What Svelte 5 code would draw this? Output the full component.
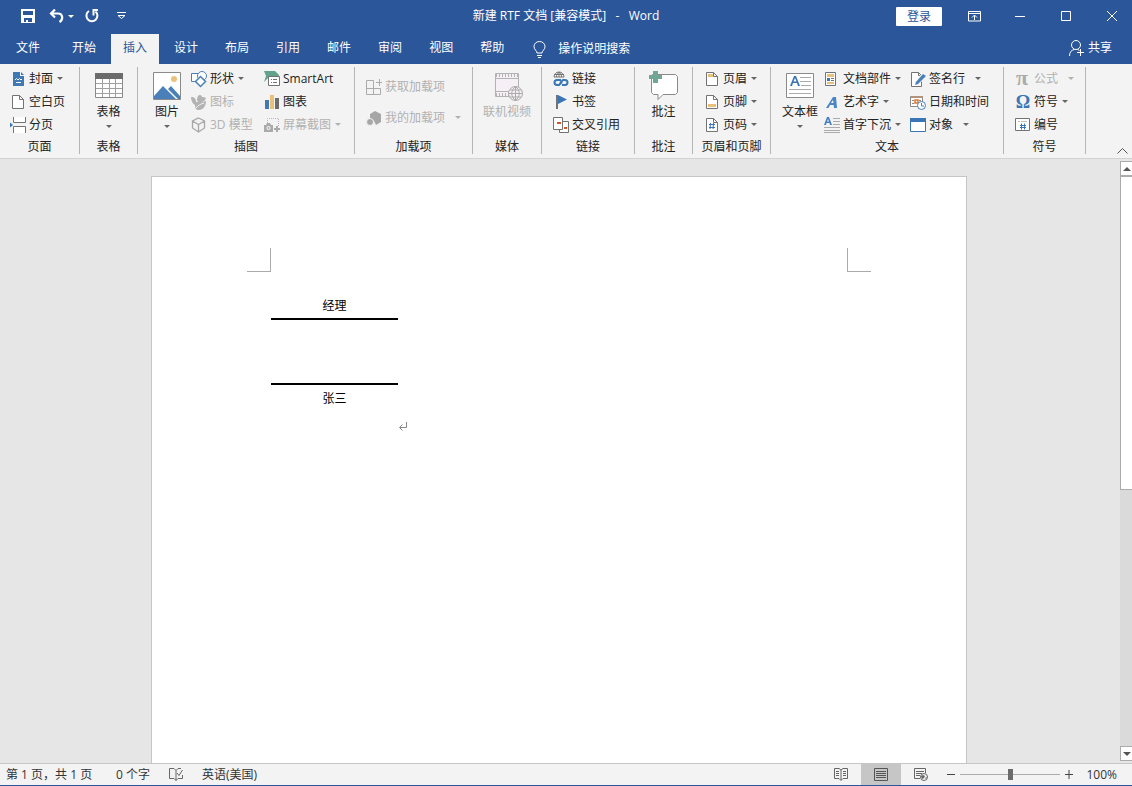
<script lang="ts">
	type Tool = { label: string; icon: string; caret?: 'near' | 'far'; disabled?: boolean };

	const tabs = ['开始', '插入', '设计', '布局', '引用', '邮件', '审阅', '视图', '帮助'];
	let activeTab = $state('插入');
	let view = $state('print');
	let zoom = $state(100);
	let query = $state('');

	const pages: Tool[] = [
		{ label: '封面', icon: 'cover', caret: 'near' },
		{ label: '空白页', icon: 'blank' },
		{ label: '分页', icon: 'break' }
	];
	const shapes: Tool[] = [
		{ label: '形状', icon: 'shapes', caret: 'near' },
		{ label: '图标', icon: 'leaf', disabled: true },
		{ label: '3D 模型', icon: 'cube', disabled: true }
	];
	const charts: Tool[] = [
		{ label: 'SmartArt', icon: 'smartart' },
		{ label: '图表', icon: 'chart' },
		{ label: '屏幕截图', icon: 'screenshot', caret: 'near', disabled: true }
	];
	const addins: Tool[] = [
		{ label: '获取加载项', icon: 'store', disabled: true },
		{ label: '我的加载项', icon: 'addin', caret: 'far', disabled: true }
	];
	const links: Tool[] = [
		{ label: '链接', icon: 'link' },
		{ label: '书签', icon: 'flag' },
		{ label: '交叉引用', icon: 'crossref' }
	];
	const headers: Tool[] = [
		{ label: '页眉', icon: 'header', caret: 'near' },
		{ label: '页脚', icon: 'footer', caret: 'near' },
		{ label: '页码', icon: 'pagenum', caret: 'near' }
	];
	const texts: Tool[] = [
		{ label: '文档部件', icon: 'parts', caret: 'near' },
		{ label: '艺术字', icon: 'wordart', caret: 'near' },
		{ label: '首字下沉', icon: 'dropcap', caret: 'near' }
	];
	const inserts: Tool[] = [
		{ label: '签名行', icon: 'sign', caret: 'far' },
		{ label: '日期和时间', icon: 'date' },
		{ label: '对象', icon: 'object', caret: 'far' }
	];
	const symbols: Tool[] = [
		{ label: '公式', icon: 'pi', caret: 'far', disabled: true },
		{ label: '符号', icon: 'omega', caret: 'near' },
		{ label: '编号', icon: 'number' }
	];
</script>

{#snippet sheet()}
	<path d="M2.5 1.5h7l4 4v9h-11z" fill="#fff" stroke="#737373" />
	<path d="M9.5 1.5v4h4" fill="none" stroke="#737373" />
{/snippet}

{#snippet icon(name: string)}
	<svg class="icon" viewBox="0 0 16 16" aria-hidden="true">
		{#if name === 'cover'}
			<path d="M3 1h7v4h4v10H3z" fill="#4179b5" />
			<path d="M11 1l3 3h-3z" fill="#4179b5" />
			<path d="M5 9l1.500-1.500L8 9l1.500-1.500L11 9l1-1M6 11.500h5" fill="none" stroke="#fff" />
		{:else if name === 'blank'}
			{@render sheet()}
		{:else if name === 'break'}
			<path d="M0 5.500v5l3-2.500z" fill="#3a76b5" />
			<path d="M3.500 0v5.500h12V0M3.500 16V9.500h12V16" fill="#fff" stroke="#737373" />
		{:else if name === 'shapes'}
			<path d="M.5 2.500h8v8h-8z" fill="#fff" stroke="#4a80ba" />
			<circle cx="11" cy="5" r="4.500" fill="#fff" stroke="#4a80ba" />
			<path d="M9.500 5.500l5 5-5 5-5-5z" fill="#fff" stroke="#4a80ba" stroke-width="1.500" />
		{:else if name === 'leaf'}
			<path d="M6 6C6 3 7 1 9 1c1 0 2 1 2 2 1 0 3 0 4 1-1 3-3 4-5 4H8C7 8 6 7 6 6z" fill="#b3b3b3" />
			<path d="M0 3c3 0 5 1 5 5h2c3 0 6 0 8-1 0 5-3 9-7 9-3 0-4-2-4-5C2 10 0 7 0 3z" fill="#b3b3b3" />
			<path d="M5 14c2-3 5-4 8-5" fill="none" stroke="#f3f3f3" />
		{:else if name === 'cube'}
			<path d="M7.500 1l6 3v7l-6 4-6-4V4zM1.500 4l6 3.500 6-3.500M7.500 7.500V15" fill="none" stroke="#a8a8a8" stroke-width="1.300" />
		{:else if name === 'smartart'}
			<path d="M0 0h11l4 4v2H5L0 11l2-6z" fill="#62a38c" />
			<path d="M4.500 5.500h11v9h-11z" fill="#fff" stroke="#737373" />
			<path d="M7 8.500h1m1 0h4M7 11.500h1m1 0h4" stroke="#737373" />
		{:else if name === 'chart'}
			<path d="M1 6h4v9H1z" fill="#4179b5" />
			<path d="M6 1h4v14H6z" fill="#e8c07a" />
			<path d="M11 4h4v11h-4z" fill="#6b6b6b" />
		{:else if name === 'screenshot'}
			<path d="M3.500 8V1.500h11V10" fill="none" stroke="#c0b0c8" stroke-dasharray="1 1" />
			<path d="M0 8h2l1-2h3l1 2h2v7H0z" fill="#aaa" />
			<circle cx="4.500" cy="11" r="2" fill="#f3f3f3" />
			<circle cx="4.500" cy="11" r="1" fill="#aaa" />
			<path d="M10 12h6M13 9v6" stroke="#aaa" stroke-width="2" />
		{:else if name === 'store'}
			<path d="M7.500 1.500h-7v14h14v-6H.500M7.500 1.500v14M10 3.500h6M13.500 0v7" fill="none" stroke="#ababab" />
		{:else if name === 'addin'}
			<path d="M4 4l5-3 6 3v8l-5 3-2-4-4-2z" fill="#a6a6a6" />
			<circle cx="4" cy="12" r="3.500" fill="#a6a6a6" stroke="#f3f3f3" />
		{:else if name === 'link'}
			<path d="M1 6a5 5 0 0 1 10 0zM1 3.500h10M6 1v5M3.500 6c0-6 5-6 5 0" fill="#fff" stroke="#737373" />
			<path d="M8 9H4a2.500 2.500 0 0 0 0 5h2l3-3M9 14h3a2.500 2.500 0 0 0 0-5h-2l-3 3" fill="none" stroke="#3a76b5" stroke-width="2" />
		{:else if name === 'flag'}
			<path d="M4 1v14" stroke="#737373" stroke-width="2" />
			<path d="M5 1l9 4.500L5 10z" fill="#3a76b5" />
		{:else if name === 'crossref'}
			<path d="M6.500 4.500h9v11h-9z" fill="#fff" stroke="#737373" />
			<path d="M.5.500h9v12h-9z" fill="#fff" stroke="#737373" />
			<path d="M4 5h4v2H4zM11 10h3v2h-3z" fill="#d3532f" />
		{:else if name === 'header'}
			{@render sheet()}
			<path d="M4 3h5v3H4z" fill="#e8c07a" />
		{:else if name === 'footer'}
			{@render sheet()}
			<path d="M4 10h8v3H4z" fill="#e8c07a" />
		{:else if name === 'pagenum'}
			{@render sheet()}
			<path d="M5 7.500h6M5 10.500h6M6.500 6l-.500 6M9.500 6L9 12" stroke="#3a76b5" />
		{:else if name === 'parts'}
			<path d="M1.500 1.500h10v13h-10z" fill="#fff" stroke="#737373" />
			<path d="M3 3h7v3H3zM3 11h7v2H3z" fill="#e8c07a" />
			<path d="M3 7h3v3H3z" fill="#3a76b5" />
			<path d="M7 7.500h3M7 9.500h3" stroke="#737373" />
		{:else if name === 'wordart'}
			<path d="M2 14L9 3h3l1 11h-3l-.300-3H6l-1.500 3zM7 9h2.500L9 6z" fill="#4a86c4" fill-rule="evenodd" />
		{:else if name === 'dropcap'}
			<path d="M0 8l3-8h2l3 8H6L5.500 6h-3L2 8zM3 4.500h2L4 2z" fill="#4a80ba" fill-rule="evenodd" />
			<path d="M9 1.500h7M9 4.500h7M9 7.500h7M0 10.500h16M0 13.500h16M0 15.500h16" stroke="#ababab" />
		{:else if name === 'sign'}
			<path d="M1.500 1.500h7l3 3v11h-10z" fill="#fff" stroke="#737373" />
			<path d="M8.500 1.500v3h3" fill="none" stroke="#737373" />
			<path d="M6 13l8-9" stroke="#f3f3f3" stroke-width="5" />
			<path d="M5 14l1-3 7-8 3 2-8 8z" fill="#4a80ba" />
		{:else if name === 'date'}
			<path d="M.5 2.500h12v10H.500z" fill="#fff" stroke="#8a8a8a" />
			<path d="M1 2h12v2H1z" fill="#b5937a" />
			<path d="M2 6.500h2M2 9.500h2M9 6.500h2" stroke="#8a8a8a" />
			<path d="M5 6h3v3H5z" fill="#fff" stroke="#e0752f" stroke-width="1.500" />
			<circle cx="11.500" cy="11.500" r="4" fill="#fff" stroke="#4a80ba" />
			<path d="M11.500 9v3H14" fill="none" stroke="#4a80ba" />
		{:else if name === 'object'}
			<path d="M.5 1.500h15v13H.500z" fill="#fff" stroke="#3a76b5" />
			<path d="M0 1h16v4H0z" fill="#3a76b5" />
		{:else if name === 'pi'}
			<text x="7" y="14" text-anchor="middle" font-size="22" fill="#ababab">π</text>
		{:else if name === 'omega'}
			<text x="8" y="14" text-anchor="middle" font-size="18" fill="#3a76b5">Ω</text>
		{:else if name === 'number'}
			<path d="M.5 1.500h14v12H.500z" fill="#fff" stroke="#737373" />
			<path d="M3 4.500h2M6 4.500h6" stroke="#c0c0c0" />
			<path d="M5 8.500h6M5 10.500h6M6.500 6.500v6M9.500 6.500v6" stroke="#3a76b5" />
		{/if}
	</svg>
{/snippet}

{#snippet tool(t: Tool)}
	<button class="tool" disabled={t.disabled}>
		{@render icon(t.icon)}
		<span>{t.label}</span>
		{#if t.caret}<i class="caret {t.caret}"></i>{/if}
	</button>
{/snippet}

{#snippet column(list: Tool[])}
	<div class="column">
		{#each list as t}
			{@render tool(t)}
		{/each}
	</div>
{/snippet}

<div class="window">
	<header class="titlebar">
		<div class="quick">
			<button aria-label="保存">
				<svg width="14" height="14" viewBox="0 0 14 14"><path d="M0 0h14v14H0zM2 2v4h10V2zM3 9v4h2v-2h2v2h4V9z" fill="#fff" fill-rule="evenodd" /></svg>
			</button>
			<button class="undo" aria-label="撤消">
				<svg width="15" height="14" viewBox="0 0 15 14"><path d="M6 .500L2 4.500l4 4M2 4.500h7c5 0 5.500 6 1.500 8.500" fill="none" stroke="#fff" stroke-width="2.200" /></svg>
				<i class="caret"></i>
			</button>
			<button aria-label="重复">
				<svg width="14" height="14" viewBox="0 0 14 14"><path d="M4 2a5.500 5.500 0 1 0 6.500.500" fill="none" stroke="#fff" stroke-width="2" /><path d="M7.500 1H13M8.500 1v5.500" fill="none" stroke="#fff" stroke-width="2" /></svg>
			</button>
			<button class="customize" aria-label="自定义快速访问工具栏">
				<svg width="9" height="8" viewBox="0 0 9 8"><path d="M0 .500h9M1 3.500l3.500 3L8 3.500z" fill="none" stroke="#fff" /></svg>
			</button>
		</div>
		<h1>新建 RTF 文档 [兼容模式]&nbsp;&nbsp; -&nbsp;&nbsp; Word</h1>
		<div class="controls">
			<button class="login">登录</button>
			<button class="control" aria-label="功能区显示选项">
				<svg width="13" height="11" viewBox="0 0 13 11"><path d="M.5.500h12v9.500H.500zM0 2.500h13M6.500 9V4.500M4 6.500L6.500 4 9 6.500" fill="none" stroke="#fff" /></svg>
			</button>
			<button class="control" aria-label="最小化">
				<svg width="10" height="11" viewBox="0 0 10 11"><path d="M0 5.500h10" stroke="#fff" /></svg>
			</button>
			<button class="control" aria-label="最大化">
				<svg width="10" height="10" viewBox="0 0 10 10"><path d="M.5.500h9v9h-9z" fill="none" stroke="#fff" /></svg>
			</button>
			<button class="control" aria-label="关闭">
				<svg width="10" height="10" viewBox="0 0 10 10"><path d="M0 0l10 10M10 0L0 10" stroke="#fff" /></svg>
			</button>
		</div>
	</header>

	<nav class="tabs">
		<button class="tab file">文件</button>
		{#each tabs as tab}
			<button class="tab" class:active={tab === activeTab} onclick={() => (activeTab = tab)}>{tab}</button>
		{/each}
		<label class="tell">
			<svg width="13" height="17" viewBox="0 0 13 17" aria-hidden="true">
				<path d="M4 12C4 9.500 1 9 1 5.500a5.500 5 0 0 1 11 0C12 9 9 9.500 9 12zM4 14.500h5M5 16.500h3" fill="none" stroke="#fff" />
			</svg>
			<input type="text" placeholder="操作说明搜索" aria-label="操作说明搜索" bind:value={query} />
		</label>
		<button class="share">
			<svg width="16" height="17" viewBox="0 0 16 17" aria-hidden="true">
				<circle cx="7" cy="5" r="4.500" fill="none" stroke="#fff" />
				<path d="M.5 16c0-4 2-6 5-6.500M8.500 9.500l2 1M8 12.500h7M11.500 9v7" fill="none" stroke="#fff" />
			</svg>
			共享
		</button>
	</nav>

	<div class="ribbon">
		<section class="group" aria-label="页面">
			<div class="tools first">{@render column(pages)}</div>
			<h2>页面</h2>
		</section>

		<section class="group" aria-label="表格">
			<div class="tools center">
				<button class="big">
					<svg viewBox="0 0 30 30" aria-hidden="true">
						<path d="M1.500 2.500h27v24h-27z" fill="#fff" stroke="#8a8a8a" />
						<path d="M1 2h28v6H1z" fill="#6b6b6b" />
						<path d="M2 12.500h26M2 17.500h26M2 22.500h26M8.500 8v18M15.500 8v18M21.500 8v18" stroke="#a0a0a0" />
					</svg>
					表格
					<i class="caret"></i>
				</button>
			</div>
			<h2>表格</h2>
		</section>

		<section class="group" aria-label="插图">
			<div class="tools">
				<button class="big">
					<svg viewBox="0 0 30 30" aria-hidden="true">
						<path d="M1.500 1.500h27v27h-27z" fill="#fff" stroke="#8a8a8a" />
						<circle cx="22" cy="8" r="3" fill="#ebc27c" />
						<path d="M2 28v-3l9-10 13 13zM16 18l3-3 9 10v3h-2z" fill="#4a80ba" />
					</svg>
					图片
					<i class="caret"></i>
				</button>
				<div class="shapes">{@render column(shapes)}</div>
				{@render column(charts)}
			</div>
			<h2>插图</h2>
		</section>

		<section class="group" aria-label="加载项">
			<div class="tools inset loose">{@render column(addins)}</div>
			<h2>加载项</h2>
		</section>

		<section class="group" aria-label="媒体">
			<div class="tools center">
				<button class="big" disabled>
					<svg viewBox="-2 0 30 30" aria-hidden="true">
						<path d="M1.500 2.500h23v23h-23z" fill="#f6f0f6" stroke="#b3b3b3" />
						<path d="M2 4.500h22M2 23.500h22" stroke="#b3b3b3" stroke-width="3" stroke-dasharray="1 2" />
						<path d="M2 7.500h22M2 20.500h22" stroke="#b3b3b3" />
						<circle cx="21.500" cy="22.500" r="7" fill="#f6f0f6" stroke="#ababab" />
						<path d="M14.500 22.500h14M21.500 15.500v14M16 19h11M16 26h11M21.500 15.500c-5 4-5 10 0 14 5-4 5-10 0-14" fill="none" stroke="#ababab" />
					</svg>
					联机视频
				</button>
			</div>
			<h2>媒体</h2>
		</section>

		<section class="group" aria-label="链接">
			<div class="tools inset">{@render column(links)}</div>
			<h2>链接</h2>
		</section>

		<section class="group" aria-label="批注">
			<div class="tools center">
				<button class="big">
					<svg viewBox="0 0 30 30" aria-hidden="true">
						<path d="M3.500 3.500h23l2 2v16l-2 2H14l-5 5v-5H4.500l-2-2v-17z" fill="#fff" stroke="#8a8a8a" />
						<path d="M0 4h4V0h5v4h4v4H9v4H4V8H0z" fill="#6fa792" />
					</svg>
					批注
				</button>
			</div>
			<h2>批注</h2>
		</section>

		<section class="group" aria-label="页眉和页脚">
			<div class="tools inset">{@render column(headers)}</div>
			<h2>页眉和页脚</h2>
		</section>

		<section class="group" aria-label="文本">
			<div class="tools">
				<button class="big">
					<svg viewBox="0 0 30 30" aria-hidden="true">
						<path d="M1.500 2.500h27v24h-27z" fill="#fff" stroke="#8a8a8a" />
						<path d="M5 15l4-10h2l4 10h-2l-1-3H8l-1 3zM8.500 10.500h3L10 7z" fill="#3a76b5" fill-rule="evenodd" />
						<path d="M15 6.500h11M15 10.500h11M16 14.500h10M4 18.500h22M4 22.500h22" stroke="#ababab" />
					</svg>
					文本框
					<i class="caret"></i>
				</button>
				<div class="parts">{@render column(texts)}</div>
				{@render column(inserts)}
			</div>
			<h2>文本</h2>
		</section>

		<section class="group" aria-label="符号">
			<div class="tools inset">{@render column(symbols)}</div>
			<h2>符号</h2>
		</section>

		<button class="collapse" aria-label="折叠功能区">
			<svg width="11" height="6" viewBox="0 0 11 6"><path d="M.5 5.500l5-5 5 5" fill="none" stroke="#555" /></svg>
		</button>
	</div>

	<main class="workspace">
		<div class="canvas">
			<article class="page">
				<div class="corners">
					<span class="corner left"></span>
					<span class="corner right"></span>
				</div>
				<div class="content">
					<table>
						<tbody>
							<tr><td class="title">经理</td></tr>
							<tr><td class="blank"></td></tr>
							<tr><td class="name">张三</td></tr>
						</tbody>
					</table>
					<svg class="mark" width="10" height="10" viewBox="0 0 10 10" aria-hidden="true">
						<path d="M8.500 1v5.500H2M4.500 3.500l-3 3 3 3" fill="none" stroke="#8a8a8a" />
					</svg>
				</div>
			</article>
		</div>
		<div class="scrollbar">
			<button class="arrow" aria-label="向上滚动"><i class="caret up"></i></button>
			<div class="track"><div class="thumb"></div></div>
			<button class="arrow" aria-label="向下滚动"><i class="caret"></i></button>
		</div>
	</main>

	<footer class="status">
		<span class="pages">第 1 页，共 1 页</span>
		<span>0 个字</span>
		<svg width="14" height="13" viewBox="0 0 14 13" aria-hidden="true">
			<path d="M7 2.500L5 .500H.500v10H5l2 2 2-2h4.500V7M7 2.500v10M7 2.500l2-2h3M8 5l2 2.500L13.500 2" fill="none" stroke="#666" />
		</svg>
		<span>英语(美国)</span>
		<div class="views">
			<button class:on={view === 'read'} aria-label="阅读视图" onclick={() => (view = 'read')}>
				<svg width="14" height="13" viewBox="0 0 14 13">
					<path d="M7 2L5 .500H.500v10H5l2 2 2-2h4.500V.500H9zM7 2v10M2 3.500h3M2 5.500h3M2 7.500h3M9 3.500h3M9 5.500h3M9 7.500h3" fill="none" stroke="#666" />
				</svg>
			</button>
			<button class:on={view === 'print'} aria-label="页面视图" onclick={() => (view = 'print')}>
				<svg width="14" height="13" viewBox="0 0 14 13">
					<path d="M.5.500h13v12H.500zM2 3.500h10M2 5.500h10M2 7.500h10M2 9.500h10" fill="none" stroke="#555" />
				</svg>
			</button>
			<button class:on={view === 'web'} aria-label="Web 版式视图" onclick={() => (view = 'web')}>
				<svg width="14" height="13" viewBox="0 0 14 13">
					<path d="M6 10.500H.500V.500h11V5M2 3.500h8M2 5.500h6M2 7.500h4" fill="none" stroke="#666" />
					<circle cx="10" cy="9" r="3.500" fill="#f3f3f3" stroke="#666" />
					<path d="M7 8l2-1 2 1-1 2-2 1zM11 10l2-1-1 2z" fill="#666" />
				</svg>
			</button>
		</div>
		<div class="zoom">
			<button aria-label="缩小" onclick={() => (zoom = Math.max(10, zoom - 10))}>
				<svg width="8" height="9" viewBox="0 0 8 9"><path d="M0 4.500h8" stroke="#444" /></svg>
			</button>
			<input type="range" min="0" max="200" bind:value={zoom} aria-label="缩放" />
			<button aria-label="放大" onclick={() => (zoom = Math.min(200, zoom + 10))}>
				<svg width="8" height="9" viewBox="0 0 8 9"><path d="M0 4.500h8M4 0v9" stroke="#444" /></svg>
			</button>
			<span class="percent">{zoom}%</span>
		</div>
	</footer>
</div>

<style>
	:global(body) {
		margin: 0;
		overflow: hidden;
	}

	.window {
		display: flex;
		flex-direction: column;
		box-sizing: border-box;
		border-bottom: 1px solid #2b579a;
		height: 100vh;
		color: #222;
		font-size: 12px;
		line-height: 20px;
		font-family: 'Open Sans', 'Noto Sans CJK SC', sans-serif;
	}

	button,
	input {
		margin: 0;
		border: 0;
		background: none;
		padding: 0;
		color: inherit;
		font: inherit;
	}

	button {
		white-space: nowrap;
	}

	svg {
		display: block;
		flex: none;
	}

	h1,
	h2 {
		margin: 0;
		font-weight: 400;
		font-size: 12px;
	}

	.caret {
		flex: none;
		border-top: 3px solid currentColor;
		border-right: 3px solid transparent;
		border-left: 3px solid transparent;
		width: 0;
		height: 0;
	}

	/* title bar */

	.titlebar {
		display: grid;
		grid-template-columns: 1fr auto 1fr;
		flex: none;
		align-items: center;
		background: #2b579a;
		height: 32px;
		color: #fff;
	}

	.quick {
		display: flex;
		align-items: center;
		gap: 11px;
		padding-left: 21px;
	}

	.quick button {
		display: flex;
		align-items: center;
		gap: 4px;
	}

	.quick .undo {
		padding-left: 3px;
	}

	.quick .customize {
		padding-left: 7px;
	}

	.controls {
		display: flex;
		justify-content: flex-end;
		align-items: center;
		gap: 6px;
	}

	.control {
		display: flex;
		justify-content: center;
		align-items: center;
		width: 40px;
		height: 32px;
	}

	.login {
		margin-right: 6px;
		border-radius: 1px;
		background: #fff;
		width: 46px;
		height: 19px;
		color: #2b579a;
		line-height: 19px;
	}

	/* tabs */

	.tabs {
		display: flex;
		flex: none;
		align-items: flex-end;
		gap: 3px;
		background: #2b579a;
		padding: 0 20px 0 4px;
		height: 32px;
		color: #fff;
	}

	.tab {
		padding: 0 12px 2px;
		height: 30px;
	}

	.file {
		margin-right: 5px;
	}

	.tab.active {
		background: #f3f3f3;
		color: #2b579a;
	}

	.tell {
		display: flex;
		flex: 1;
		align-items: center;
		gap: 12px;
		padding-left: 14px;
		height: 30px;
	}

	.tell input {
		flex: 1;
		outline: none;
		padding-bottom: 2px;
		min-width: 0;
		height: 28px;
	}

	.tell input::placeholder {
		opacity: 1;
		color: #fff;
	}

	.share {
		display: flex;
		align-items: center;
		gap: 3px;
		padding-bottom: 2px;
		height: 30px;
	}

	/* ribbon */

	.ribbon {
		display: grid;
		grid-template-rows: 94px;
		grid-template-columns: 80px 58px 217px 118px 69px 93px 58px 78px 233px 82px 1fr;
		flex: none;
		border-bottom: 1px solid #d2d2d2;
		background: #f3f3f3;
	}

	.group {
		margin: 3px 0 4px;
		border-right: 1px solid #b5b5b5;
		min-width: 0;
	}

	.group h2 {
		line-height: 16px;
		text-align: center;
	}

	.tools {
		display: flex;
		gap: 2px;
		padding-left: 7px;
		height: 72px;
	}

	.first {
		padding-left: 10px;
	}

	.inset {
		padding-left: 11px;
	}

	.center {
		justify-content: center;
		padding-left: 0;
	}

	.column {
		display: flex;
		flex-direction: column;
		align-items: flex-start;
	}

	.tool {
		display: flex;
		align-items: center;
		gap: 3px;
		height: 23px;
		line-height: 23px;
	}

	.loose .tool {
		height: 31px;
	}

	.loose .column {
		padding-top: 4px;
	}

	.icon {
		width: 16px;
		height: 16px;
		overflow: visible;
		font-weight: 700;
		font-family: 'Liberation Serif', serif;
	}

	.tool .caret {
		margin-left: 1px;
		color: #666;
	}

	.tool .caret.far {
		margin-left: 7px;
	}

	.shapes {
		width: 71px;
	}

	.parts {
		width: 84px;
	}

	.big {
		display: flex;
		flex-direction: column;
		align-items: center;
		justify-content: flex-start;
		padding-top: 4px;
		min-width: 44px;
	}

	.big svg {
		margin-bottom: 1px;
		width: 30px;
		height: 30px;
		overflow: visible;
	}

	.big .caret {
		margin-top: 3px;
		color: #666;
	}

	.tool:disabled,
	.big:disabled,
	.tool:disabled .caret {
		color: #b1b1b1;
	}

	.collapse {
		justify-self: end;
		align-self: end;
		padding: 4px;
	}

	/* document area */

	.workspace {
		display: flex;
		flex: 1;
		background: #e6e6e6;
		min-height: 0;
	}

	.canvas {
		display: flex;
		flex: 1;
		justify-content: center;
		padding: 17px 2px 0 0;
		min-width: 0;
		overflow: hidden;
	}

	.page {
		box-sizing: border-box;
		border: 1px solid #c6c6c6;
		border-bottom: 0;
		background: #fff;
		width: 816px;
		color: #000;
	}

	.corners {
		display: flex;
		justify-content: space-between;
		padding: 71px 95px 0;
	}

	.corner {
		box-sizing: border-box;
		border-bottom: 1px solid #ababab;
		width: 24px;
		height: 24px;
	}

	.corner.left {
		border-right: 1px solid #ababab;
	}

	.corner.right {
		border-left: 1px solid #ababab;
	}

	.content {
		display: flex;
		align-items: flex-end;
		padding: 22px 119px 0;
	}

	table {
		margin-bottom: 18px;
		border-spacing: 0;
		width: 127px;
		text-align: center;
	}

	td {
		padding: 0;
		height: 24px;
		line-height: 24px;
	}

	.title,
	.blank {
		border-bottom: 2px solid #000;
	}

	.blank {
		height: 63px;
	}

	.name {
		height: 28px;
	}

	/* scroll bar */

	.scrollbar {
		display: flex;
		flex-direction: column;
		flex: none;
		margin: 2px 0;
		background: #dadada;
		width: 12px;
	}

	.arrow {
		display: flex;
		justify-content: center;
		align-items: center;
		border: 1px solid #ababab;
		border-right: 0;
		background: #fff;
		height: 15px;
		color: #555;
	}

	.arrow .caret {
		border-width: 4px 4px 0;
	}

	.up {
		transform: rotate(180deg);
	}

	.track {
		flex: 1;
	}

	.thumb {
		box-sizing: border-box;
		border: 1px solid #ababab;
		border-right: 0;
		background: #fff;
		height: 55%;
	}

	/* status bar */

	.status {
		display: flex;
		flex: none;
		align-items: center;
		gap: 19px;
		border-top: 1px solid #c6c6c6;
		background: #f3f3f3;
		padding: 0 15px 0 6px;
		height: 21px;
		color: #333;
	}

	.pages {
		min-width: 91px;
	}

	.views {
		display: flex;
		margin-left: auto;
	}

	.views button {
		display: flex;
		justify-content: center;
		align-items: center;
		width: 40px;
		height: 21px;
	}

	.views .on {
		background: #c6c6c6;
	}

	.zoom {
		display: flex;
		align-items: center;
		gap: 5px;
		margin-left: -13px;
	}

	.zoom input {
		appearance: none;
		width: 100px;
		height: 20px;
	}

	.zoom input::-webkit-slider-runnable-track {
		background: linear-gradient(#ababab, #ababab) center / 100% 1px no-repeat;
		height: 11px;
	}

	.zoom input::-webkit-slider-thumb {
		appearance: none;
		background: #6b6b6b;
		width: 5px;
		height: 11px;
	}

	.percent {
		margin-left: 8px;
	}
</style>
